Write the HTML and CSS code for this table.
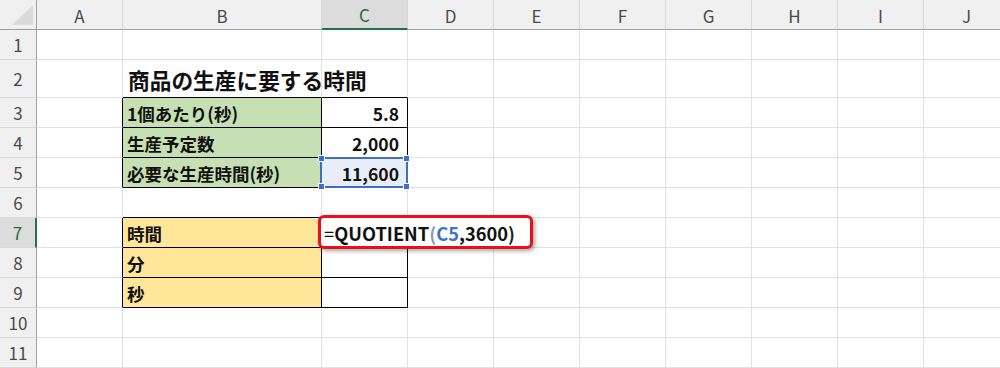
FILE: index.html
```html
<!DOCTYPE html>
<html lang="ja">
<head>
<meta charset="utf-8">
<title>QUOTIENT</title>
<link rel="stylesheet" href="styles.css">
</head>
<body>
<div class="sheet">
  <!-- header row -->
  <div class="corner"><span class="tri"></span></div>
  <div class="ch">A</div><div class="ch">B</div><div class="ch active">C</div><div class="ch">D</div><div class="ch">E</div><div class="ch">F</div><div class="ch">G</div><div class="ch">H</div><div class="ch">I</div><div class="ch">J</div>

  <!-- row 1 -->
  <div class="rh">1</div>
  <div class="c"></div><div class="c"></div><div class="c"></div><div class="c"></div><div class="c"></div><div class="c"></div><div class="c"></div><div class="c"></div><div class="c"></div><div class="c"></div>

  <!-- row 2 -->
  <div class="rh">2</div>
  <div class="c"></div><div class="c bb title">商品の生産に要する時間</div><div class="c bb"></div><div class="c"></div><div class="c"></div><div class="c"></div><div class="c"></div><div class="c"></div><div class="c"></div><div class="c"></div>

  <!-- row 3 -->
  <div class="rh">3</div>
  <div class="c br"></div><div class="c g br bb txt">1個あたり(秒)</div><div class="c br bb num">5.8</div><div class="c"></div><div class="c"></div><div class="c"></div><div class="c"></div><div class="c"></div><div class="c"></div><div class="c"></div>

  <!-- row 4 -->
  <div class="rh">4</div>
  <div class="c br"></div><div class="c g br bb txt">生産予定数</div><div class="c br bb num">2,000</div><div class="c"></div><div class="c"></div><div class="c"></div><div class="c"></div><div class="c"></div><div class="c"></div><div class="c"></div>

  <!-- row 5 -->
  <div class="rh">5</div>
  <div class="c br"></div><div class="c g br bb txt">必要な生産時間(秒)</div><div class="c br bb num sel">11,600<span class="h h1"></span><span class="h h2"></span><span class="h h3"></span><span class="h h4"></span></div><div class="c"></div><div class="c"></div><div class="c"></div><div class="c"></div><div class="c"></div><div class="c"></div><div class="c"></div>

  <!-- row 6 -->
  <div class="rh">6</div>
  <div class="c"></div><div class="c bb"></div><div class="c bb"></div><div class="c"></div><div class="c"></div><div class="c"></div><div class="c"></div><div class="c"></div><div class="c"></div><div class="c"></div>

  <!-- row 7 -->
  <div class="rh active">7</div>
  <div class="c br"></div><div class="c y br bb txt">時間</div><div class="c br bb edit"><div class="formula"><span class="eq">=</span>QUOTIENT<span class="lp">(</span><span class="ref">C5</span>,3600<span class="rp">)</span></div></div><div class="c"></div><div class="c"></div><div class="c"></div><div class="c"></div><div class="c"></div><div class="c"></div><div class="c"></div>

  <!-- row 8 -->
  <div class="rh">8</div>
  <div class="c br"></div><div class="c y br bb txt">分</div><div class="c br bb"></div><div class="c"></div><div class="c"></div><div class="c"></div><div class="c"></div><div class="c"></div><div class="c"></div><div class="c"></div>

  <!-- row 9 -->
  <div class="rh">9</div>
  <div class="c br"></div><div class="c y br bb txt">秒</div><div class="c br bb"></div><div class="c"></div><div class="c"></div><div class="c"></div><div class="c"></div><div class="c"></div><div class="c"></div><div class="c"></div>

  <!-- row 10 -->
  <div class="rh">10</div>
  <div class="c"></div><div class="c"></div><div class="c"></div><div class="c"></div><div class="c"></div><div class="c"></div><div class="c"></div><div class="c"></div><div class="c"></div><div class="c"></div>

  <!-- row 11 -->
  <div class="rh">11</div>
  <div class="c"></div><div class="c"></div><div class="c"></div><div class="c"></div><div class="c"></div><div class="c"></div><div class="c"></div><div class="c"></div><div class="c"></div><div class="c"></div>
</div>
</body>
</html>
```

FILE: styles.css
```css
html, body {
  margin: 0;
  padding: 0;
  background: #ffffff;
  overflow: hidden;
}

.sheet {
  display: grid;
  grid-template-columns: 37px 86px 199px 86px 86px 86px 86px 86px 86px 86px 86px;
  grid-template-rows: 30px 30px 38px 30px 30px 30px 30px 30px 30px 30px 30px 30px;
  width: 1009px;
  font-family: "Noto Sans CJK JP", "Noto Sans", sans-serif;
}

.sheet > div {
  box-sizing: border-box;
  border-right: 1px solid #e1e1e1;
  border-bottom: 1px solid #e1e1e1;
}

.corner {
  background: #f0f0f0;
  position: relative;
  border-right: 1px solid #9f9f9f !important;
  border-bottom: 1px solid #9f9f9f !important;
}

.tri {
  position: absolute;
  right: 3px;
  bottom: 4px;
  width: 21px;
  height: 20px;
  background: #dadada;
  clip-path: polygon(100% 0, 100% 100%, 0 100%);
}

.ch {
  background: #f0f0f0;
  color: #4a4a4a;
  font-size: 17px;
  font-weight: 400;
  display: flex;
  align-items: center;
  justify-content: center;
  border-right: 1px solid #d8d8d8 !important;
  border-bottom: 1px solid #9f9f9f !important;
  padding-top: 1px;
}

.ch.active {
  background: #dcdcdc;
  color: #1e6b3e;
  border-bottom: 2px solid #217346 !important;
}

.rh {
  background: #f0f0f0;
  color: #4a4a4a;
  font-size: 17px;
  font-weight: 400;
  display: flex;
  align-items: center;
  justify-content: center;
  border-right: 1px solid #9f9f9f !important;
  border-bottom: 1px solid #d8d8d8 !important;
}

.rh.active {
  background: #dcdcdc;
  color: #1e6b3e;
  border-right: 2px solid #217346 !important;
}

.c {
  display: flex;
  align-items: center;
  font-size: 17.5px;
  font-weight: 700;
  color: #111;
  white-space: nowrap;
}

.title {
  font-size: 21.7px;
  padding-left: 5px;
  padding-top: 2px;
  overflow: visible;
}

.txt {
  padding-left: 4px;
  padding-top: 1px;
}

.num {
  justify-content: flex-end;
  padding-right: 8px;
  padding-top: 1px;
}

.g { background: #c6e0b4; }
.y { background: #ffe699; }

.sheet > .br { border-right: 1px solid #000; }
.sheet > .bb { border-bottom: 1px solid #000; }

.sel {
  position: relative;
  background: #e8eef8;
}

.sel::after {
  content: "";
  position: absolute;
  left: -2px;
  top: -1px;
  right: -1px;
  bottom: -1px;
  border: 2px solid #3c6fc5;
  pointer-events: none;
}

.h {
  position: absolute;
  width: 5px;
  height: 5px;
  background: #3c6fc5;
  border: 1px solid #ffffff;
  z-index: 2;
}
.h1 { left: -4px; top: -3px; }
.h2 { right: -3px; top: -3px; }
.h3 { left: -4px; bottom: -3px; }
.h4 { right: -3px; bottom: -3px; }

.edit {
  position: relative;
  overflow: visible;
}

.formula {
  position: absolute;
  left: -4px;
  top: -3px;
  width: 215px;
  height: 34px;
  box-sizing: border-box;
  border: 3px solid #e8101a;
  border-radius: 6px;
  background: #ffffff;
  box-shadow: 2px 2px 4px rgba(0, 0, 0, 0.35);
  z-index: 3;
  display: flex;
  align-items: center;
  padding-left: 3px;
  padding-top: 1px;
  font-size: 18.3px;
  font-weight: 700;
  color: #111;
}

.eq { font-weight: 400; }
.lp { color: #7f9ccb; }
.ref { color: #3f72c6; }
.rp { color: #222; }
```
